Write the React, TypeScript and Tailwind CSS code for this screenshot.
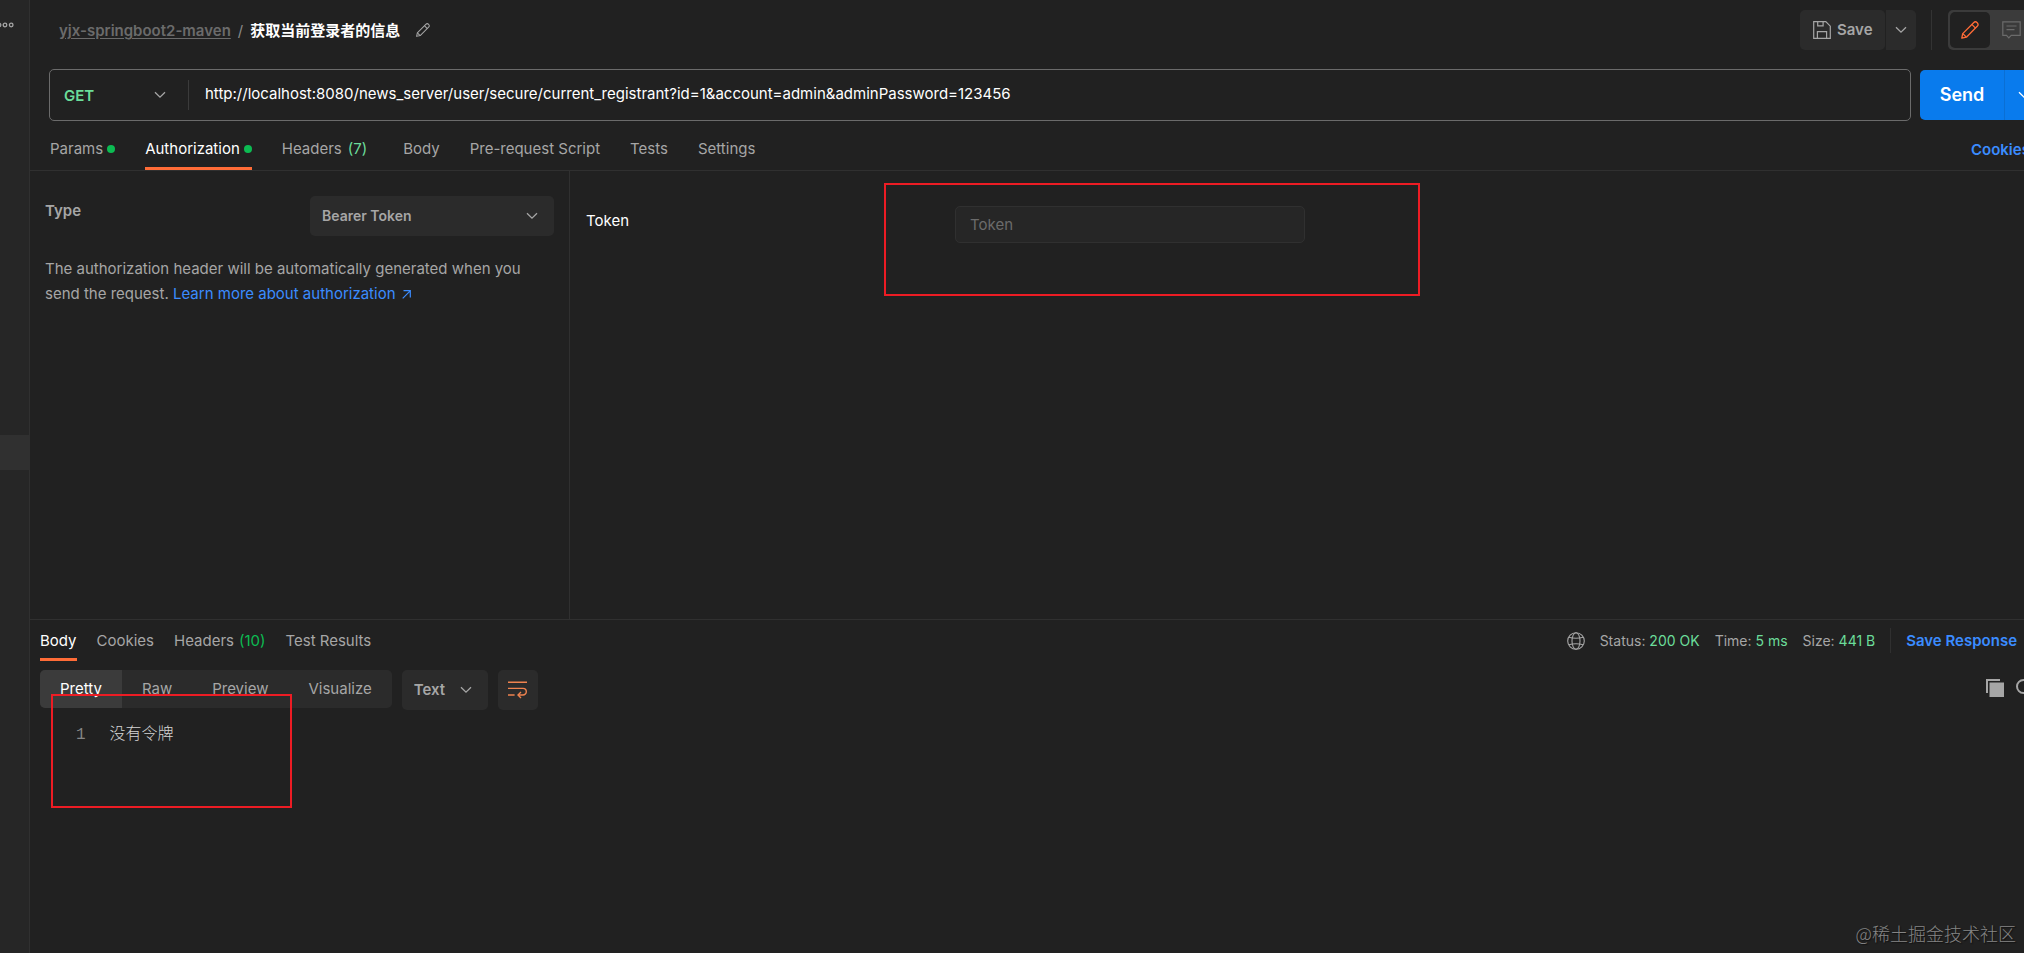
import React from "react";

const requestTabs = [
  { label: "Params", dot: true },
  { label: "Authorization", dot: true, active: true },
  { label: "Headers", count: "(7)" },
  { label: "Body" },
  { label: "Pre-request Script" },
  { label: "Tests" },
  { label: "Settings" },
];

const responseTabs = [
  { label: "Body", active: true },
  { label: "Cookies" },
  { label: "Headers", count: "(10)" },
  { label: "Test Results" },
];

const stats = [
  { label: "Status:", value: "200 OK" },
  { label: "Time:", value: "5 ms" },
  { label: "Size:", value: "441 B" },
];

const viewModes = ["Pretty", "Raw", "Preview", "Visualize"];

function Chevron({ className = "" }: { className?: string }) {
  return (
    <svg className={`shrink-0 ${className}`} width="12" height="8" viewBox="0 0 12 8" fill="none" stroke="currentColor" strokeWidth="1.3" aria-hidden="true">
      <path d="M1 1.2l5 5 5-5" />
    </svg>
  );
}

function PencilIcon({ size, className = "" }: { size: number; className?: string }) {
  return (
    <svg className={className} width={size} height={size} viewBox="0 0 18 18" fill="none" stroke="currentColor" strokeWidth="1.3" strokeLinejoin="round" aria-hidden="true">
      <path d="M.8 17.2l.9-4.6L12.6 1.7a2.5 2.5 0 0 1 3.6 3.6L5.4 16.2z" />
      <path d="M10.8 3.4l3.7 3.7M1.8 12.6l3.5 3.5" />
    </svg>
  );
}

function SaveIcon() {
  return (
    <svg width="18" height="18" viewBox="0 0 18 18" fill="none" stroke="currentColor" strokeWidth="1.2" aria-hidden="true">
      <path d="M.7.7h12.1l4.5 4.5v12.1H.7z" />
      <path d="M4.7.7v4.1h5.4V.7M4.4 17.2v-6.6h9.2v6.6" />
    </svg>
  );
}

function CommentIcon() {
  return (
    <svg width="19" height="18" viewBox="0 0 19 18" fill="none" stroke="currentColor" strokeWidth="1.2" aria-hidden="true">
      <path d="M.8.8h17.4v13.6h-9l-2.4 2.5-2.3-2.5H.8z" />
      <path d="M4.5 5h10M4.5 8.6h8" />
    </svg>
  );
}

function GlobeIcon() {
  return (
    <svg width="18" height="18" viewBox="0 0 18 18" fill="none" stroke="currentColor" strokeWidth="1.1" aria-hidden="true">
      <circle cx="9" cy="9" r="8.3" />
      <ellipse cx="9" cy="9" rx="4" ry="8.3" />
      <path d="M1.8 5.2Q9 7.4 16.2 5.2M1.8 12.8Q9 10.6 16.2 12.8" />
    </svg>
  );
}

function WrapIcon() {
  return (
    <svg width="19" height="18" viewBox="0 0 19 18" fill="none" stroke="currentColor" strokeWidth="1.4" aria-hidden="true">
      <path d="M0 1.2h19M0 7.4h15a3.3 3.3 0 0 1 0 6.6h-4.6M0 14h6.6" />
      <path d="M13 11l-3 3 3 3" />
    </svg>
  );
}

// Red frame used to point out a part of the screen
function Highlight({ className }: { className: string }) {
  return <div className={`absolute border-2 border-[#ed1c24] pointer-events-none ${className}`} />;
}

function Sidebar() {
  return (
    <aside className="w-[30px] shrink-0 bg-[#262626] border-r border-[#303030] overflow-hidden">
      <div className="h-[435px] pt-[22px]">
        <svg width="14" height="6" viewBox="0 0 14 6" fill="none" stroke="#a6a6a6" strokeWidth="1.3" aria-hidden="true">
          <circle cx="-1" cy="3" r="1.8" />
          <circle cx="5" cy="3" r="1.8" />
          <circle cx="11.2" cy="3" r="1.8" />
        </svg>
      </div>
      <div className="h-[35px] bg-[#303030]" />
    </aside>
  );
}

function Header() {
  return (
    <header className="flex items-center h-[60px] pl-[29px]">
      <nav className="flex items-center pt-0.5 font-semibold whitespace-nowrap">
        <a href="#" className="text-[#6b6b6b] underline underline-offset-2">yjx-springboot2-maven</a>
        <span className="mx-[7px] font-normal text-[#8a8a8a]">/</span>
        <h1 className="text-white font-bold">获取当前登录者的信息</h1>
      </nav>
      <button aria-label="Rename request" className="ml-4 text-[#a6a6a6]">
        <PencilIcon size={14} />
      </button>
      <div className="flex items-center h-10 ml-auto">
        <button className="flex items-center gap-1.5 h-10 w-[85px] pl-[13px] bg-[#2b2b2b] rounded-[5px] text-[#a6a6a6] font-semibold">
          <SaveIcon />
          Save
        </button>
        <button aria-label="Save options" className="flex items-center justify-center h-10 w-[30px] ml-px bg-[#2b2b2b] rounded-r-[5px] text-[#a6a6a6]">
          <Chevron />
        </button>
        <div className="h-10 w-px ml-[15px] mr-4 bg-[#333333]" />
        <div className="flex items-center h-10 w-[76px] pl-0.5 bg-[#3b3b3b] rounded-l-[5px]">
          <button aria-label="Build" className="flex items-center justify-center h-9 w-10 bg-[#212121] rounded-[5px] text-[#ff6c37]">
            <PencilIcon size={18} />
          </button>
          <button aria-label="Comments" className="flex items-center h-9 pl-3 text-[#6b6b6b]">
            <CommentIcon />
          </button>
        </div>
      </div>
    </header>
  );
}

function UrlBar() {
  return (
    <div className="flex items-center h-[52px] mt-[9px] pl-[19px]">
      <div className="flex items-center flex-1 h-full border border-[#6b6b6b] rounded-[5px]">
        <div className="relative flex items-center w-[139px] h-[30px] border-r border-[#3b3b3b]">
          <select aria-label="Method" className="appearance-none w-full h-full pl-[14px] pt-0.5 bg-transparent text-[#6bdd9a] font-semibold outline-none">
            <option>GET</option>
          </select>
          <Chevron className="absolute right-[22px] text-[#a6a6a6] pointer-events-none" />
        </div>
        <input
          aria-label="Request URL"
          className="flex-1 h-full pl-4 pb-1 bg-transparent text-white outline-none"
          defaultValue="http://localhost:8080/news_server/user/secure/current_registrant?id=1&account=admin&adminPassword=123456"
        />
      </div>
      <div className="flex w-26 h-[50px] ml-[9px] bg-[#097bed] rounded-l-[5px] text-white overflow-hidden">
        <button className="w-[85px] shrink-0 border-r border-[#0a6fd4] text-lg font-semibold">Send</button>
        <button aria-label="Send options" className="flex items-center shrink-0 w-[40px] pl-[13px]">
          <Chevron />
        </button>
      </div>
    </div>
  );
}

function RequestTabs() {
  return (
    <div className="flex h-[50px] pl-5 border-b border-[#303030]">
      <div className="flex gap-[30px]">
        {requestTabs.map((tab) => (
          <button
            key={tab.label}
            className={`flex items-center gap-1 h-[49px] pt-2.5 whitespace-nowrap border-b-[3px] ${
              tab.active ? "border-[#ff6c37] text-white" : "border-transparent text-[#a6a6a6]"
            }`}
          >
            {tab.label}
            {tab.dot && <span className="size-2 rounded-full bg-[#0cbb52]" />}
            {tab.count && <span className="px-0.5 mr-1 text-[#6bdd9a]">{tab.count}</span>}
          </button>
        ))}
      </div>
      <a href="#" className="w-[53px] ml-auto pt-[19px] text-[#3b8cff] font-semibold overflow-hidden">Cookies</a>
    </div>
  );
}

function AuthPanel() {
  return (
    <section className="flex h-[448px]">
      <div className="w-[540px] shrink-0 px-[15px] pt-[25px] border-r border-[#303030]">
        <div className="flex items-start justify-between">
          <label htmlFor="auth-type" className="pt-[5px] text-[#a6a6a6] font-semibold">Type</label>
          <div className="relative flex items-center w-[244px] h-10">
            <select id="auth-type" className="appearance-none w-full h-full pl-3 bg-[#2b2b2b] rounded-[5px] text-sm text-[#a6a6a6] font-semibold outline-none">
              <option>Bearer Token</option>
            </select>
            <Chevron className="absolute right-4 text-[#a6a6a6] pointer-events-none" />
          </div>
        </div>
        <p className="mt-5 leading-[25px] text-[#a6a6a6]">
          The authorization header will be automatically generated when you send the request.{" "}
          <a href="#" className="text-[#3b8cff]">
            Learn more about authorization
            <svg className="inline ml-1.5" width="9" height="9" viewBox="0 0 9 9" fill="none" stroke="currentColor" strokeWidth="1.2" aria-hidden="true">
              <path d="M1.5.7h6.8v6.8M8.2.8L.7 8.3" />
            </svg>
          </a>
        </p>
      </div>
      <div className="relative flex items-start flex-1 pl-4 pt-[35px]">
        <label htmlFor="token" className="w-[369px] pt-[5px] text-white">Token</label>
        <input
          id="token"
          placeholder="Token"
          className="w-[350px] h-[37px] px-[14px] bg-[#262626] border border-[#303030] rounded-[5px] text-white placeholder-[#6b6b6b] outline-none"
        />
        <Highlight className="left-[314px] top-3 w-[536px] h-[113px]" />
      </div>
    </section>
  );
}

function ResponsePanel() {
  return (
    <section className="relative flex-1 pl-2.5 border-t border-[#303030]">
      <div className="flex items-center h-[41px]">
        <div className="flex gap-5">
          {responseTabs.map((tab) => (
            <button
              key={tab.label}
              className={`flex items-center gap-[5px] h-10 pt-1 whitespace-nowrap border-b-[3px] ${
                tab.active ? "border-[#ff6c37] text-white" : "border-transparent text-[#a6a6a6]"
              }`}
            >
              {tab.label}
              {tab.count && <span className="text-[#0cbb52]">{tab.count}</span>}
            </button>
          ))}
        </div>
        <div className="flex items-center gap-[15px] ml-auto mr-[7px] whitespace-nowrap">
          <span className="text-[#a6a6a6]">
            <GlobeIcon />
          </span>
          {stats.map((stat) => (
            <span key={stat.label} className="text-sm text-[#a6a6a6]">
              {stat.label} <span className="text-[#6bdd9a]">{stat.value}</span>
            </span>
          ))}
          <span className="w-px h-[25px] bg-[#303030]" />
          <button className="text-[#3b8cff] font-semibold">Save Response</button>
        </div>
      </div>
      <div className="flex items-start mt-[9px]">
        <div className="flex h-[38px] bg-[#2b2b2b] rounded-[5px] overflow-hidden">
          {viewModes.map((mode, i) => (
            <button key={mode} className={`px-5 ${i === 0 ? "bg-[#3b3b3b] text-white" : "text-[#a6a6a6]"}`}>
              {mode}
            </button>
          ))}
        </div>
        <div className="relative flex items-center w-[86px] h-10 ml-2.5">
          <select aria-label="Response format" className="appearance-none w-full h-full pl-3 bg-[#2b2b2b] rounded-[5px] text-[#a6a6a6] font-semibold outline-none">
            <option>Text</option>
          </select>
          <Chevron className="absolute right-4 text-[#a6a6a6] pointer-events-none" />
        </div>
        <button aria-label="Wrap lines" className="flex items-center justify-center w-10 h-10 ml-2.5 bg-[#2b2b2b] rounded-[5px] text-[#f0834f]">
          <WrapIcon />
        </button>
        <div className="flex items-center gap-3 ml-auto pt-[9px] text-[#a6a6a6]">
          <button aria-label="Copy response">
            <svg width="18" height="18" viewBox="0 0 18 18" fill="currentColor" aria-hidden="true">
              <path d="M0 0h14v2H2v12H0z" />
              <path d="M3.5 3.5H18V18H3.5z" />
            </svg>
          </button>
          <button aria-label="Search response">
            <svg width="8" height="18" viewBox="0 0 8 18" fill="none" stroke="currentColor" strokeWidth="2" aria-hidden="true">
              <circle cx="7.5" cy="7.5" r="6.5" />
            </svg>
          </button>
        </div>
      </div>
      <pre className="flex gap-6 mt-[15px] pl-9 text-base leading-5 font-['Liberation_Mono','Noto_Sans_CJK_SC',monospace]">
        <span className="text-[#858585]">1</span>
        <code className="font-['Liberation_Mono','Noto_Sans_CJK_SC',monospace] font-light text-[#d4d4d4]">没有令牌</code>
      </pre>
      <Highlight className="left-[21px] top-[74px] w-[241px] h-[114px]" />
    </section>
  );
}

export default function App() {
  return (
    <div className="relative flex min-h-screen bg-[#212121] text-[15px] leading-5 font-['Inter','Noto_Sans_CJK_SC',sans-serif] overflow-hidden">
      <Sidebar />
      <main className="flex flex-col flex-1 min-w-0">
        <Header />
        <UrlBar />
        <RequestTabs />
        <AuthPanel />
        <ResponsePanel />
      </main>
      <div className="absolute right-2 bottom-2 text-lg leading-6 font-light text-[#858585] font-['Noto_Sans_CJK_SC',sans-serif] [text-shadow:1px_1px_1px_#111]">
        @稀土掘金技术社区
      </div>
    </div>
  );
}
